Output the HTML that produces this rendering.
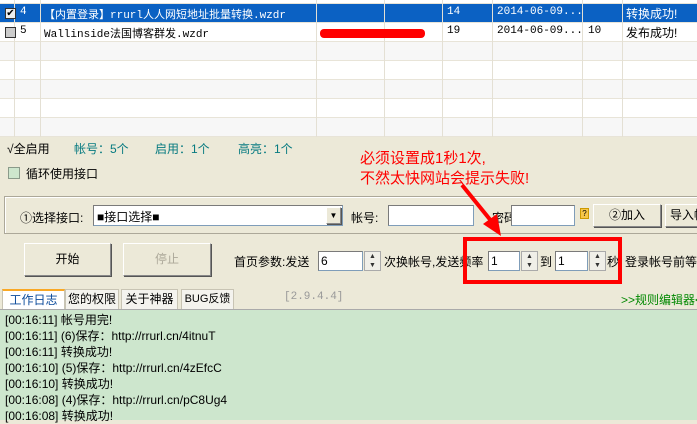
<!DOCTYPE html>
<html><head><meta charset="utf-8"><style>
*{margin:0;padding:0;box-sizing:border-box}
body{width:697px;height:420px;overflow:hidden;background:#ece9d8;position:relative;font-family:"Liberation Sans","Noto Sans CJK SC",sans-serif;font-size:12px;color:#000}
.a{position:absolute;white-space:nowrap}
.row{position:absolute;left:0;width:697px;height:19px;border-bottom:1px solid #e8e4d8}
.vl{position:absolute;top:0;width:1px;height:137px;background:#e4e0d4}
.mono{font-family:"Liberation Mono","Noto Sans CJK SC",monospace;font-size:11px}
.cb{position:absolute;left:5px;width:11px;height:11px;border:1px solid #333;background:#ddd}
.inp{position:absolute;background:#fff;border:1px solid #7f9db9;border-top-color:#7a7a7a;border-left-color:#7a7a7a}
.btn{position:absolute;background:#ece9d8;border:1px solid #888;border-top-color:#fff;border-left-color:#fff;box-shadow:1px 1px 0 #555;text-align:center;white-space:nowrap;overflow:hidden}
.spin{position:absolute;width:17px;height:20px;border:1px solid #aaa;background:#f0efe8;font-size:7px;line-height:9px;text-align:center;color:#333}
.log{position:absolute;left:5px;font-size:12px;white-space:nowrap}
.tab{position:absolute;top:289px;height:20px;background:#f4f3ee;border:1px solid #c8c4b4;border-bottom:none;text-align:center;line-height:18px;white-space:nowrap}
</style></head><body>
<div class="a" style="left:0;top:0;width:697px;height:137px;background:#fff"></div>
<div class="row" style="top:-15px;background:#fff"></div>
<div class="row" style="top:4px;background:#0b61c3;color:#fff"></div>
<div class="row" style="top:23px;background:#fff"></div>
<div class="row" style="top:42px;background:#f7f7f7"></div>
<div class="row" style="top:61px;background:#fff"></div>
<div class="row" style="top:80px;background:#f7f7f7"></div>
<div class="row" style="top:99px;background:#fff"></div>
<div class="row" style="top:118px;background:#f7f7f7;height:19px"></div>
<div class="vl" style="left:14px"></div><div class="vl" style="left:40px"></div><div class="vl" style="left:316px"></div><div class="vl" style="left:384px"></div><div class="vl" style="left:442px"></div><div class="vl" style="left:492px"></div><div class="vl" style="left:582px"></div><div class="vl" style="left:622px"></div>
<div class="cb" style="top:8px;background:#eee;font-size:10px;line-height:9px;text-align:center">✔</div>
<div class="cb" style="top:27px;background:#ccc"></div>
<div class="a mono" style="left:20px;top:6px;color:#fff">4</div>
<div class="a mono" style="left:44px;top:6px;color:#fff">【内置登录】rrurl人人网短地址批量转换.wzdr</div>
<div class="a mono" style="left:447px;top:6px;color:#fff">14</div>
<div class="a mono" style="left:497px;top:6px;color:#fff">2014-06-09...</div>
<div class="a" style="left:626px;top:5px;color:#fff">转换成功!</div>
<div class="a mono" style="left:20px;top:25px">5</div>
<div class="a mono" style="left:44px;top:25px">Wallinside法国博客群发.wzdr</div>
<div class="a" style="left:320px;top:29px;width:105px;height:9px;background:#f00;border-radius:4px"></div>
<div class="a mono" style="left:447px;top:25px">19</div>
<div class="a mono" style="left:497px;top:25px">2014-06-09...</div>
<div class="a mono" style="left:588px;top:25px">10</div>
<div class="a" style="left:626px;top:24px">发布成功!</div>

<div class="a" style="left:7px;top:140px">√全启用</div>
<div class="a" style="left:74px;top:140px;color:#067a80">帐号：5个</div>
<div class="a" style="left:155px;top:140px;color:#067a80">启用：1个</div>
<div class="a" style="left:238px;top:140px;color:#067a80">高亮：1个</div>
<div class="a" style="left:360px;top:147px;color:#f00;font-size:15px">必须设置成1秒1次,</div>
<div class="a" style="left:360px;top:167px;color:#f00;font-size:15px">不然太快网站会提示失败!</div>
<div class="a" style="left:8px;top:167px;width:12px;height:12px;border:1px solid #8a9a8a;background:#cde6cd"></div>
<div class="a" style="left:26px;top:165px">循环使用接口</div>

<div class="a" style="left:4px;top:196px;width:700px;height:38px;border:1px solid #aca899;box-shadow:inset 1px 1px 0 #fff"></div>
<div class="a" style="left:20px;top:209px">①选择接口:</div>
<div class="inp" style="left:93px;top:205px;width:250px;height:21px;padding:2px 3px">■接口选择■</div>
<div class="btn" style="left:326px;top:207px;width:15px;height:17px;font-size:8px;line-height:15px">▼</div>
<div class="a" style="left:351px;top:209px">帐号:</div>
<div class="inp" style="left:388px;top:205px;width:86px;height:21px"></div>
<div class="a" style="left:492px;top:209px">密码:</div>
<div class="inp" style="left:511px;top:205px;width:64px;height:21px"></div>
<div class="a" style="left:580px;top:208px;width:9px;height:11px;background:#f6c64a;border:1px solid #c90;font-size:8px;line-height:9px;text-align:center">?</div>
<div class="btn" style="left:593px;top:204px;width:68px;height:23px;line-height:21px">②加入</div>
<div class="btn" style="left:665px;top:204px;width:40px;height:23px;line-height:21px;text-align:left;padding-left:4px">导入帐</div>

<div class="btn" style="left:24px;top:243px;width:87px;height:33px;line-height:31px">开始</div>
<div class="btn" style="left:123px;top:243px;width:88px;height:33px;line-height:31px;color:#aca899">停止</div>
<div class="a" style="left:234px;top:253px">首页参数:发送</div>
<div class="inp" style="left:318px;top:251px;width:45px;height:20px;padding:2px">6</div>
<div class="spin" style="left:364px;top:251px">▲<br>▼</div>
<div class="a" style="left:384px;top:253px">次换帐号,发送频率</div>
<div class="inp" style="left:488px;top:251px;width:32px;height:20px;padding:2px">1</div>
<div class="spin" style="left:521px;top:251px">▲<br>▼</div>
<div class="a" style="left:540px;top:253px">到</div>
<div class="inp" style="left:555px;top:251px;width:33px;height:20px;padding:2px">1</div>
<div class="spin" style="left:589px;top:251px">▲<br>▼</div>
<div class="a" style="left:607px;top:253px">秒</div>
<div class="a" style="left:625px;top:253px">登录帐号前等</div>
<div class="a" style="left:463px;top:237px;width:159px;height:47px;border:4px solid #f00"></div>
<svg class="a" style="left:0;top:0" width="697" height="420"><line x1="462" y1="185" x2="492" y2="222" stroke="#f00" stroke-width="4"/><polygon points="501,236 483,224 497,214" fill="#f00"/></svg>

<div class="tab" style="left:2px;width:63px;background:#fff;border-top:2px solid #f9a825;color:#0a4a9a">工作日志</div>
<div class="tab" style="left:65px;width:54px">您的权限</div>
<div class="tab" style="left:121px;width:57px">关于神器</div>
<div class="tab" style="left:181px;width:53px;font-size:11px">BUG反馈</div>
<div class="a" style="left:284px;top:291px;color:#999;font-family:'Liberation Mono',monospace;font-size:11px">[2.9.4.4]</div>
<div class="a" style="left:621px;top:291px;color:#080">&gt;&gt;规则编辑器&lt;</div>
<div class="a" style="left:0;top:309px;width:697px;height:111px;background:#cde6cd;border-top:1px solid #aaa"></div>
<div class="log" style="top:311px">[00:16:11] 帐号用完!</div>
<div class="log" style="top:327px">[00:16:11] (6)保存：http://rrurl.cn/4itnuT</div>
<div class="log" style="top:343px">[00:16:11] 转换成功!</div>
<div class="log" style="top:359px">[00:16:10] (5)保存：http://rrurl.cn/4zEfcC</div>
<div class="log" style="top:375px">[00:16:10] 转换成功!</div>
<div class="log" style="top:391px">[00:16:08] (4)保存：http://rrurl.cn/pC8Ug4</div>
<div class="log" style="top:407px">[00:16:08] 转换成功!</div>
</body></html>
